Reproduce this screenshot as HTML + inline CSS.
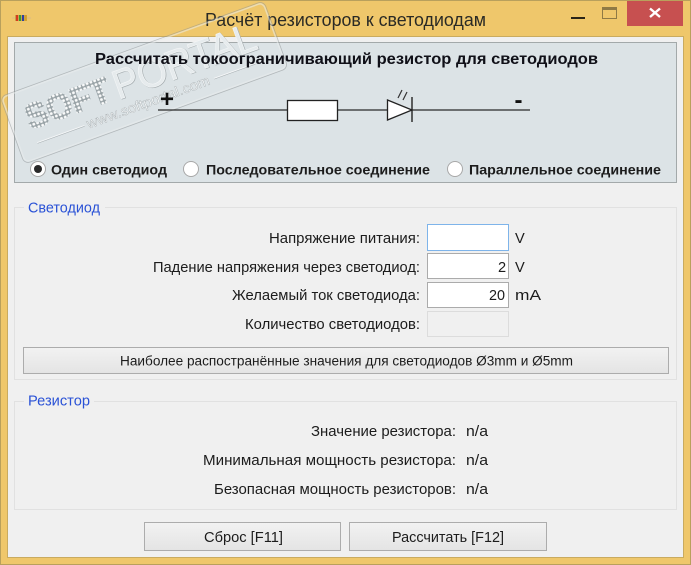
<!DOCTYPE html>
<html><head><meta charset="utf-8">
<style>
html,body{margin:0;padding:0;background:#efc76b;width:691px;height:565px;overflow:hidden}
svg{display:block;font-family:"Liberation Sans",sans-serif}
text{fill:#1c1c1c;font-size:14.6px}
.b{font-weight:bold;font-size:14.2px}
.leg{fill:#2a52d6;font-size:15px}
</style></head><body>
<svg width="691" height="565" viewBox="0 0 691 565" xmlns="http://www.w3.org/2000/svg">
<defs>
<pattern id="dots" width="4" height="4" patternUnits="userSpaceOnUse">
<rect width="4" height="4" fill="#98a2a6"/>
<rect x="0.6" y="0.6" width="2.8" height="2.8" rx="1" fill="#fafbfb"/>
</pattern>
<linearGradient id="btn" x1="0" y1="0" x2="0" y2="1">
<stop offset="0" stop-color="#f2f2f2"/><stop offset="1" stop-color="#e4e4e4"/>
</linearGradient>
</defs>

<!-- window frame -->
<rect x="0.5" y="0.5" width="690" height="564" fill="#efc76b" stroke="#b9a05c"/>
<rect x="627" y="1" width="56" height="25" fill="#c75050"/>
<path d="M650 8.500L660 17M660 8.500L650 17" stroke="#fff" stroke-width="2.400"/>
<rect x="571" y="17" width="14" height="2" fill="#2a2417"/>
<rect x="602.500" y="7.500" width="14" height="11" fill="none" stroke="#8f7a45"/>
<rect x="602" y="7" width="15" height="3" fill="#8f7a45"/>
<!-- app icon -->
<rect x="12" y="17.500" width="19" height="1" fill="#d9b98a"/>
<rect x="15" y="15" width="12" height="6" fill="#c9a24a"/>
<rect x="16" y="15" width="2" height="6" fill="#d83a20"/>
<rect x="19" y="15" width="2" height="6" fill="#3a9a30"/>
<rect x="22" y="15" width="2" height="6" fill="#3040a0"/>
<rect x="25" y="15" width="1.500" height="6" fill="#d8a020"/>
<text x="205" y="26" textLength="281" lengthAdjust="spacingAndGlyphs" style="font-size:18px;fill:#2a2a25">Расчёт резисторов к светодиодам</text>

<!-- client -->
<rect x="7.500" y="36.500" width="676" height="521" fill="#f0f0f0" stroke="#c9ab60"/>

<!-- header panel -->
<rect x="14.500" y="42.500" width="662" height="140" fill="#dce3e6" stroke="#a3a9aa"/>

<!-- watermark -->
<g transform="translate(144 82) rotate(-20)">
<rect x="-139" y="-34" width="278" height="69" rx="5" fill="none" stroke="#e9eded" stroke-opacity="0.55" stroke-width="1.500"/>
<rect x="-140.300" y="-35.300" width="280.600" height="71.600" rx="6" fill="none" stroke="#8f9698" stroke-opacity="0.55" stroke-width="0.800"/>
<text x="-123" y="6" textLength="88" lengthAdjust="spacingAndGlyphs" style="font-size:35px;font-weight:bold;fill:url(#dots);stroke:url(#dots);stroke-width:1.500">SOFT</text>
<text x="-29.500" y="8.500" textLength="150" lengthAdjust="spacingAndGlyphs" style="font-size:41px;fill:none;stroke:#a9b1b4;stroke-width:1">PORTAL</text>
<text x="-30" y="8" textLength="150" lengthAdjust="spacingAndGlyphs" style="font-size:41px;fill:#e6ebed;stroke:#f4f6f7;stroke-width:0.600">PORTAL</text>
<text x="-68" y="25" textLength="130" lengthAdjust="spacingAndGlyphs" style="font-size:14px;fill:#f4f6f7;stroke:#9aa2a5;stroke-width:0.300">www.softportal.com</text>
<rect x="-121" y="20" width="50" height="1" fill="#f4f6f7"/>
<rect x="-121" y="21" width="50" height="0.600" fill="#a9b1b4"/>
<rect x="67" y="20" width="44" height="1" fill="#f4f6f7"/>
<rect x="67" y="21" width="44" height="0.600" fill="#a9b1b4"/>
</g>

<text x="95" y="64" class="b" textLength="503" lengthAdjust="spacingAndGlyphs" style="font-size:16px;fill:#101018">Рассчитать токоограничивающий резистор для светодиодов</text>

<!-- circuit -->
<path d="M158 110H287M338 110H387M412 110H530" stroke="#2a2a2a" stroke-width="1.300" fill="none"/>
<rect x="287.500" y="100.500" width="50" height="20" fill="#fff" stroke="#222" stroke-width="1.300"/>
<path d="M387.500 100L412 110L387.500 120Z" fill="#fff" stroke="#222" stroke-width="1.300"/>
<path d="M412 97V122" stroke="#222" stroke-width="1.400"/>
<path d="M398 98L402 90M403 100L407 92" stroke="#333" stroke-width="1.200"/>
<text x="160" y="107" style="font-size:24px;font-weight:bold;fill:#111">+</text>
<text x="514.500" y="108" style="font-size:24px;font-weight:bold;fill:#111">-</text>

<!-- radios -->
<circle cx="38" cy="169" r="7.500" fill="#fff" stroke="#a8a8a8"/>
<circle cx="38" cy="169" r="4" fill="#2a2a2a"/>
<circle cx="191" cy="169" r="7.500" fill="#fff" stroke="#a8a8a8"/>
<circle cx="455" cy="169" r="7.500" fill="#fff" stroke="#a8a8a8"/>
<text x="51" y="174.500" class="b" textLength="116" lengthAdjust="spacingAndGlyphs">Один светодиод</text>
<text x="206" y="174.500" class="b" textLength="224" lengthAdjust="spacingAndGlyphs">Последовательное соединение</text>
<text x="469" y="174.500" class="b" textLength="192" lengthAdjust="spacingAndGlyphs">Параллельное соединение</text>

<!-- group 1 -->
<rect x="14.500" y="207.500" width="662" height="172" fill="none" stroke="#e1e1e1"/>
<rect x="24" y="200" width="81" height="14" fill="#f0f0f0"/>
<text x="28" y="212.500" class="leg" textLength="72" lengthAdjust="spacingAndGlyphs">Светодиод</text>

<text x="269" y="243" textLength="151" lengthAdjust="spacingAndGlyphs">Напряжение питания:</text>
<text x="153" y="272" textLength="267" lengthAdjust="spacingAndGlyphs">Падение напряжения через светодиод:</text>
<text x="232" y="300" textLength="188" lengthAdjust="spacingAndGlyphs">Желаемый ток светодиода:</text>
<text x="245" y="329" textLength="175" lengthAdjust="spacingAndGlyphs">Количество светодиодов:</text>

<rect x="427.500" y="224.500" width="81" height="26" fill="#fff" stroke="#7eb4ea"/>
<rect x="427.500" y="253.500" width="81" height="25" fill="#fff" stroke="#ababab"/>
<rect x="427.500" y="282.500" width="81" height="25" fill="#fff" stroke="#ababab"/>
<rect x="427.500" y="311.500" width="81" height="25" fill="#f0f0f0" stroke="#dcdcdc"/>
<text x="498" y="272">2</text>
<text x="489" y="300" textLength="16" lengthAdjust="spacingAndGlyphs">20</text>
<text x="515" y="243">V</text>
<text x="515" y="272">V</text>
<text x="515" y="300" textLength="26" lengthAdjust="spacingAndGlyphs">mA</text>

<rect x="23.500" y="347.500" width="645" height="26" fill="url(#btn)" stroke="#acacac"/>
<text x="120" y="365.500" textLength="453" lengthAdjust="spacingAndGlyphs" style="font-size:13.400px">Наиболее распостранённые значения для светодиодов Ø3mm и Ø5mm</text>

<!-- group 2 -->
<rect x="14.500" y="401.500" width="662" height="108" fill="none" stroke="#e1e1e1"/>
<rect x="24" y="394" width="70" height="14" fill="#f0f0f0"/>
<text x="28" y="405.500" class="leg" textLength="62" lengthAdjust="spacingAndGlyphs">Резистор</text>

<text x="311" y="436" textLength="145" lengthAdjust="spacingAndGlyphs">Значение резистора:</text>
<text x="203" y="465" textLength="253" lengthAdjust="spacingAndGlyphs">Минимальная мощность резистора:</text>
<text x="214" y="494" textLength="242" lengthAdjust="spacingAndGlyphs">Безопасная мощность резисторов:</text>
<text x="466" y="436" textLength="22" lengthAdjust="spacingAndGlyphs">n/a</text>
<text x="466" y="465" textLength="22" lengthAdjust="spacingAndGlyphs">n/a</text>
<text x="466" y="494" textLength="22" lengthAdjust="spacingAndGlyphs">n/a</text>

<!-- buttons -->
<rect x="144.500" y="522.500" width="196" height="28" fill="url(#btn)" stroke="#acacac"/>
<rect x="349.500" y="522.500" width="197" height="28" fill="url(#btn)" stroke="#acacac"/>
<text x="204" y="542" textLength="79" lengthAdjust="spacingAndGlyphs">Сброс [F11]</text>
<text x="392" y="542" textLength="112" lengthAdjust="spacingAndGlyphs">Рассчитать [F12]</text>
</svg>
</body></html>
